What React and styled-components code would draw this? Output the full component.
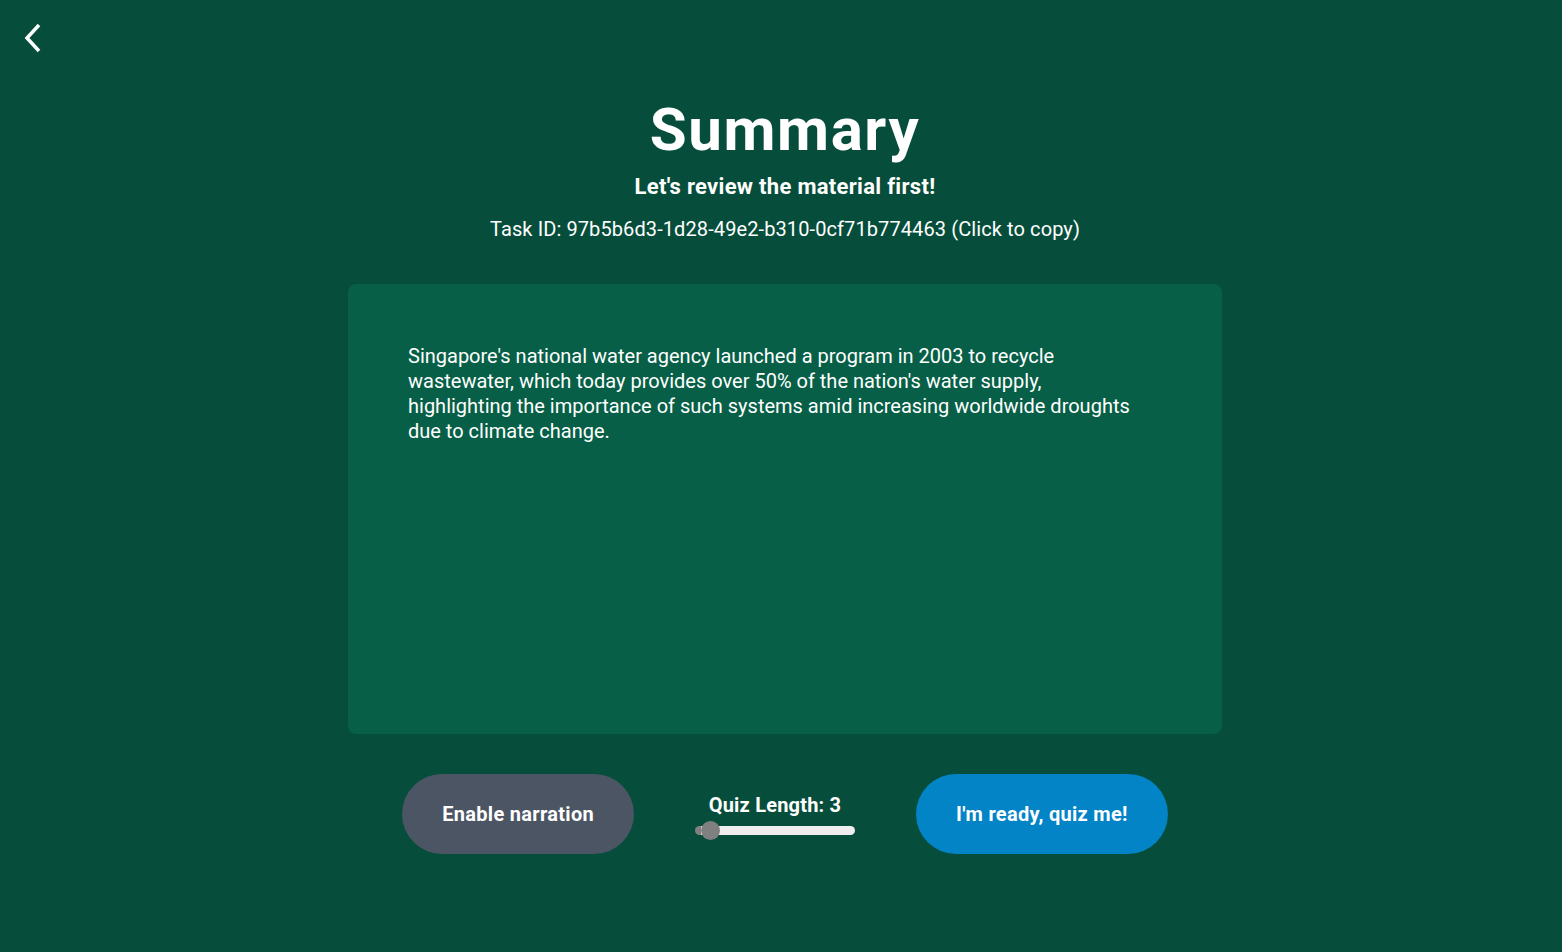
import { useState } from "react";
import styled, { createGlobalStyle } from "styled-components";

const GlobalStyle = createGlobalStyle`
  html, body {
    margin: 0;
    padding: 0;
    background: #064e3b;
  }
  body {
    font-family: Roboto, "Liberation Sans", sans-serif;
    color: #ffffff;
  }
`;

const summary =
    "Singapore's national water agency launched a program in 2003 to recycle wastewater, which today provides over 50% of the nation's water supply, highlighting the importance of such systems amid increasing worldwide droughts due to climate change.";

const App = () => {
    const [length, setLength] = useState(3);

    return (
        <>
            <GlobalStyle />
            <Page>
                <TopBar>
                    <BackButton aria-label="Back">
                        <svg width="20" height="32" viewBox="0 0 20 32" fill="none">
                            <path d="M17 3 L5 16 L17 29" stroke="#fff" strokeWidth="3.5" />
                        </svg>
                    </BackButton>
                </TopBar>
                <Main>
                    <Title>Summary</Title>
                    <Subtitle>Let's review the material first!</Subtitle>
                    <TaskId>Task ID: 97b5b6d3-1d28-49e2-b310-0cf71b774463 (Click to copy)</TaskId>
                    <Panel>
                        <SummaryText>{summary}</SummaryText>
                    </Panel>
                    <Actions>
                        <PillButton $bg="#4b5563">Enable narration</PillButton>
                        <SliderBox>
                            <SliderLabel>Quiz Length: {length}</SliderLabel>
                            <Range
                                type="range"
                                min={3}
                                max={10}
                                value={length}
                                onChange={(e) => setLength(Number(e.target.value))}
                            />
                        </SliderBox>
                        <PillButton $bg="#0284c7">I'm ready, quiz me!</PillButton>
                    </Actions>
                </Main>
            </Page>
        </>
    );
};

export default App;

const Page = styled.div`
  min-height: 952px;
  display: flex;
  flex-direction: column;
`;

const TopBar = styled.div`
  height: 70px;
  padding: 22px 0 0 22px;
  box-sizing: border-box;
`;

const BackButton = styled.button`
  background: none;
  border: none;
  padding: 0;
  cursor: pointer;
  display: flex;
`;

const Main = styled.div`
  display: flex;
  flex-direction: column;
  align-items: center;
  padding-top: 30px;
  padding-left: 8px;
`;

const Title = styled.h1`
  margin: 0;
  font-size: 60px;
  line-height: 60px;
  font-weight: 700;
  letter-spacing: 1.6px;
`;

const Subtitle = styled.div`
  margin-top: 13px;
  font-size: 22px;
  line-height: 28px;
  font-weight: 700;
  letter-spacing: 0.3px;
`;

const TaskId = styled.div`
  margin-top: 14px;
  font-size: 20px;
  line-height: 28px;
  letter-spacing: 0.1px;
  cursor: pointer;
`;

const Panel = styled.div`
  margin-top: 41px;
  width: 874px;
  height: 450px;
  box-sizing: border-box;
  padding: 60px;
  background: #065f46;
  border-radius: 8px;
`;

const SummaryText = styled.p`
  margin: 0;
  max-width: 722px;
  font-size: 20px;
  line-height: 25px;
`;

const Actions = styled.div`
  margin-top: 40px;
  display: flex;
  align-items: center;
  gap: 61px;
`;

const PillButton = styled.button`
  height: 80px;
  padding: 0 40px;
  border: none;
  border-radius: 40px;
  background: ${(p) => p.$bg};
  color: #ffffff;
  font-family: Roboto, "Liberation Sans", sans-serif;
  font-size: 20px;
  font-weight: 700;
  letter-spacing: 0.3px;
  cursor: pointer;
`;

const SliderBox = styled.div`
  display: flex;
  flex-direction: column;
  align-items: center;
  gap: 9px;
  width: 160px;
`;

const SliderLabel = styled.div`
  font-size: 20px;
  line-height: 24px;
  font-weight: 700;
  letter-spacing: 0.2px;
`;

const Range = styled.input`
  -webkit-appearance: none;
  appearance: none;
  box-sizing: border-box;
  width: 160px;
  height: 9px;
  margin: 0;
  border: none;
  border-left: 6px solid #808080;
  border-radius: 5px;
  background: #eeeeee;
  outline: none;

  &::-webkit-slider-thumb {
    -webkit-appearance: none;
    appearance: none;
    width: 19px;
    height: 19px;
    border-radius: 50%;
    background: #808080;
    cursor: pointer;
  }
`;
